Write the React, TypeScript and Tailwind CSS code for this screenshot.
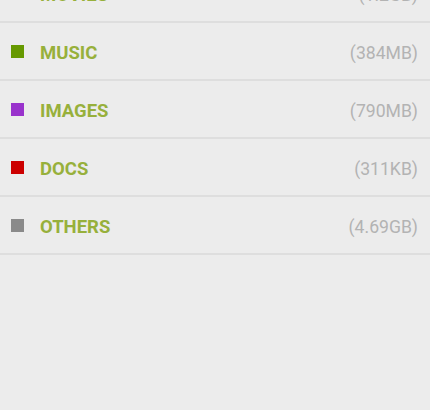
const items = [
  { name: 'MOVIES', size: '(1.2GB)', color: 'bg-[#0099cc]' },
  { name: 'MUSIC', size: '(384MB)', color: 'bg-[#669900]' },
  { name: 'IMAGES', size: '(790MB)', color: 'bg-[#9933cc]' },
  { name: 'DOCS', size: '(311KB)', color: 'bg-[#cc0000]' },
  { name: 'OTHERS', size: '(4.69GB)', color: 'bg-[#8a8a8a]' },
]

export default function App() {
  return (
    <div className="h-[410px] w-[430px] overflow-hidden bg-[#ececec] font-['Roboto',sans-serif]">
      <div className="-mt-[35px] flex flex-col">
        {items.map((item) => (
          <div key={item.name} className="flex h-[58px] items-start border-b-2 border-[#dedede] pl-[11px] pr-[12px]">
            <span className={`mt-[22px] h-[13px] w-[13px] shrink-0 ${item.color}`} />
            <div className="ml-[16px] mt-[21px] flex flex-1 items-baseline justify-between leading-none">
              <span className="text-[18.5px] font-bold text-[#97b03b]">{item.name}</span>
              <span className="text-[17.6px] text-[#b3b3b3]">{item.size}</span>
            </div>
          </div>
        ))}
      </div>
    </div>
  )
}
